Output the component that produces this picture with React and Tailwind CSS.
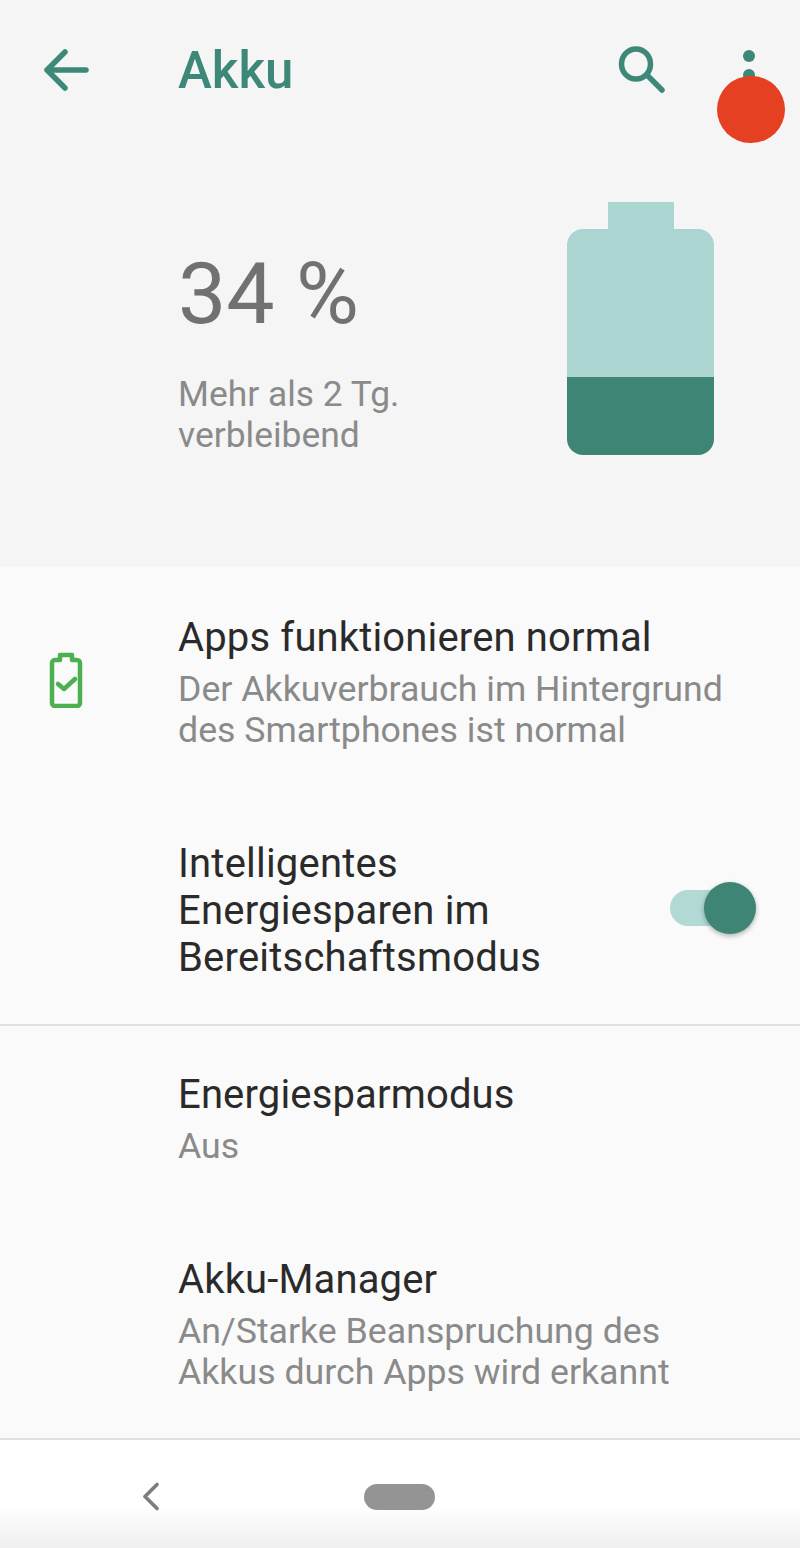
import React from 'react';

function BatteryCheck() {
  return (
    <svg width="36" height="56" viewBox="0 0 36 56" fill="none" stroke="#4caf50" strokeWidth="4.5" strokeLinejoin="round" strokeLinecap="round">
      <path d="M4 11a3 3 0 0 1 3-3h5V3h12v5h5a3 3 0 0 1 3 3v40a3 3 0 0 1-3 3H7a3 3 0 0 1-3-3z" />
      <path d="M10 32l6 5 11-10" />
    </svg>
  );
}

function BackArrow() {
  return (
    <svg width="46" height="42" viewBox="0 0 46 42" fill="none" stroke="#3d8878" strokeWidth="5.5" strokeLinecap="round" strokeLinejoin="round">
      <path d="M42 21H3M21 3L3 21l18 18" />
    </svg>
  );
}

function SearchGlass() {
  return (
    <svg width="48" height="48" viewBox="0 0 48 48" fill="none" stroke="#3d8878" strokeWidth="5.5" strokeLinecap="round">
      <ellipse cx="18" cy="18" rx="14.5" ry="15" />
      <path d="M29 29l15 15" />
    </svg>
  );
}

function NavBack() {
  return (
    <svg width="20" height="29" viewBox="0 0 20 29" fill="none" stroke="#7d7d7d" strokeWidth="3.6" strokeLinecap="round" strokeLinejoin="round">
      <path d="M16 2.5L4 14.5l12 12" />
    </svg>
  );
}

function Row({ title, sub, className }) {
  return (
    <div className={className}>
      <div className="text-[40px] leading-[48px] tracking-[0.15px] text-[#2a2a2a]">{title}</div>
      {sub && <div className="mt-[7px] text-[35.7px] leading-[41px] text-[#8a8a8a]">{sub}</div>}
    </div>
  );
}

export default function App() {
  return (
    <div className="relative flex h-[1548px] w-[800px] flex-col overflow-hidden bg-[#fafafa] font-['Roboto',sans-serif]">
      {/* Toolbar + battery header */}
      <div className="h-[567px] shrink-0 bg-[#f5f5f5]">
        <div className="flex h-[142px] items-start pt-[40px]">
          <div className="flex w-[178px] shrink-0 pl-[44px] pt-[9px]">
            <BackArrow />
          </div>
          <div className="flex-1 text-[51px] leading-[62px] font-medium text-[#3d8878]">Akku</div>
          <div className="mr-[77px] pt-[6px]">
            <SearchGlass />
          </div>
          <div className="mr-[45px] flex flex-col gap-[7px] pt-[10px]">
            <div className="h-[12px] w-[12px] rounded-full bg-[#3d8878]" />
            <div className="h-[12px] w-[12px] rounded-full bg-[#3d8878]" />
          </div>
        </div>
        <div className="flex items-start pl-[178px] pr-[86px] pt-[60px]">
          <div className="flex-1 pt-[42px]">
            <div className="text-[86px] leading-[100px] text-[#717171]">34 %</div>
            <div className="mt-[30px] text-[35.4px] leading-[41px] text-[#8a8a8a]">Mehr als 2 Tg.<br />verbleibend</div>
          </div>
          <div className="flex w-[147px] flex-col items-center">
            <div className="h-[27px] w-[66px] bg-[#acd4d0]" />
            <div className="h-[148px] w-full rounded-t-[16px] bg-[#acd4d0]" />
            <div className="h-[78px] w-full rounded-b-[16px] bg-[#3e8575]" />
          </div>
        </div>
      </div>

      {/* Settings list */}
      <div className="flex h-[459px] shrink-0 flex-col border-b-2 border-[#e0e0e0]">
        <div className="flex pt-[47px]">
          <div className="flex w-[178px] shrink-0 pl-[48px] pt-[38px]">
            <BatteryCheck />
          </div>
          <Row title="Apps funktionieren normal" sub={<>Der Akkuverbrauch im Hintergrund<br />des Smartphones ist normal</>} />
        </div>
        <div className="mt-[89px] flex items-center pl-[178px]">
          <div className="flex-1 text-[40px] leading-[47px] tracking-[0.2px] text-[#2a2a2a]">
            Intelligentes<br />Energiesparen im<br />Bereitschaftsmodus
          </div>
          <div className="relative mr-[50px] mb-[6px] h-[36px] w-[80px] rounded-full bg-[#b3d9d5]">
            <div className="absolute top-[-8px] right-[-6px] h-[52px] w-[52px] rounded-full bg-[#3e8575] shadow-[0_2px_5px_rgba(0,0,0,0.3)]" />
          </div>
        </div>
      </div>

      <div className="flex h-[414px] shrink-0 flex-col border-b-2 border-[#e0e0e0] pl-[178px] pt-[45px]">
        <Row title="Energiesparmodus" sub="Aus" />
        <Row className="mt-[89px]" title="Akku-Manager" sub={<>An/Starke Beanspruchung des<br />Akkus durch Apps wird erkannt</>} />
      </div>

      {/* Nav bar */}
      <div className="relative flex flex-1 items-center justify-center bg-gradient-to-b from-white from-60% to-[#efefef] pt-[6px]">
        <div className="absolute left-[141px] top-[42px]">
          <NavBack />
        </div>
        <div className="mr-[2px] h-[26px] w-[71px] rounded-full bg-[#949494]" />
      </div>

      {/* Red marker over the overflow menu */}
      <div className="absolute left-[717px] top-[76px] h-[67px] w-[68px] rounded-full bg-[#e64022]" />
    </div>
  );
}
